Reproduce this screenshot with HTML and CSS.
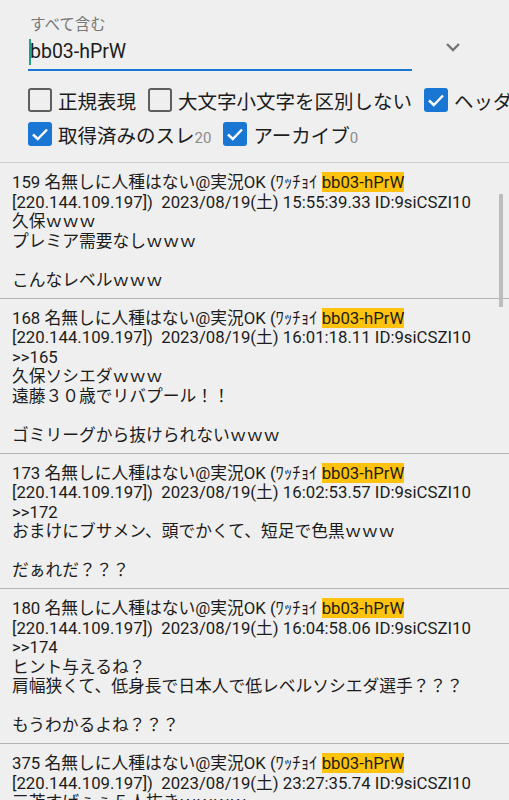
FILE: index.html
```html
<!DOCTYPE html>
<html lang="ja">
<head>
    <meta charset="UTF-8">
    <meta name="viewport" content="width=device-width, initial-scale=1.0">
    <title>検索</title>
    <link rel="stylesheet" href="styles.css">
</head>
<body>
    <div class="search">
        <div class="field-row">
            <div class="field">
                <div class="field-label">すべて含む</div>
                <div class="field-input"><span class="caret"></span>bb03-hPrW</div>
            </div>
            <svg class="chevron" width="16" height="10" viewBox="0 0 16 10">
                <path d="M2 2 L8 8 L14 2" fill="none" stroke="#757575" stroke-width="2.4"/>
            </svg>
        </div>

        <div class="options">
            <div class="opt-row">
                <label class="opt"><span class="box"></span>正規表現</label>
                <label class="opt"><span class="box"></span>大文字小文字を区別しない</label>
                <label class="opt"><span class="box checked"><svg viewBox="0 0 24 24"><path d="M5 12.5 L9.8 17 L19 7.5"/></svg></span>ヘッダ</label>
            </div>
            <div class="opt-row">
                <label class="opt"><span class="box checked"><svg viewBox="0 0 24 24"><path d="M5 12.5 L9.8 17 L19 7.5"/></svg></span><span>取得済みのスレ<span class="count">20</span></span></label>
                <label class="opt"><span class="box checked"><svg viewBox="0 0 24 24"><path d="M5 12.5 L9.8 17 L19 7.5"/></svg></span><span>アーカイブ<span class="count">0</span></span></label>
            </div>
        </div>
    </div>

    <div class="results">
<div class="post">159 名無しに人種はない@実況OK (ﾜｯﾁｮｲ <span class="hit">bb03-hPrW</span>
[220.144.109.197])  2023/08/19(土) 15:55:39.33 ID:9siCSZI10
久保ｗｗｗ
プレミア需要なしｗｗｗ

こんなレベルｗｗｗ</div>
<div class="post">168 名無しに人種はない@実況OK (ﾜｯﾁｮｲ <span class="hit">bb03-hPrW</span>
[220.144.109.197])  2023/08/19(土) 16:01:18.11 ID:9siCSZI10
&gt;&gt;165
久保ソシエダｗｗｗ
遠藤３０歳でリバプール！！

ゴミリーグから抜けられないｗｗｗ</div>
<div class="post">173 名無しに人種はない@実況OK (ﾜｯﾁｮｲ <span class="hit">bb03-hPrW</span>
[220.144.109.197])  2023/08/19(土) 16:02:53.57 ID:9siCSZI10
&gt;&gt;172
おまけにブサメン、頭でかくて、短足で色黒ｗｗｗ

だぁれだ？？？</div>
<div class="post">180 名無しに人種はない@実況OK (ﾜｯﾁｮｲ <span class="hit">bb03-hPrW</span>
[220.144.109.197])  2023/08/19(土) 16:04:58.06 ID:9siCSZI10
&gt;&gt;174
ヒント与えるね？
肩幅狭くて、低身長で日本人で低レベルソシエダ選手？？？

もうわかるよね？？？</div>
<div class="post">375 名無しに人種はない@実況OK (ﾜｯﾁｮｲ <span class="hit">bb03-hPrW</span>
[220.144.109.197])  2023/08/19(土) 23:27:35.74 ID:9siCSZI10
三苫すげぇぇ５人抜きｗｗｗｗ</div>
        <div class="thumb"></div>
    </div>
</body>
</html>
```

FILE: styles.css
```css
* {
    box-sizing: border-box;
}

body {
    margin: 0;
    height: 800px;
    overflow: hidden;
    background: #efefef;
    color: #1c1c1c;
    font-family: Roboto, "Noto Sans CJK JP", sans-serif;
}

/* search header */
.search {
    padding: 0 0 13px 28px;
    overflow: hidden;
}

.field-row {
    display: flex;
    align-items: flex-start;
}

.field {
    width: 384px;
    padding: 17px 0 4px 2px;
    border-bottom: 2px solid #1976d2;
}

.field-label {
    font-size: 15.5px;
    line-height: 16px;
    color: #787878;
}

.field-input {
    margin-top: 6px;
    font-size: 19.5px;
    line-height: 26px;
    height: 26px;
    color: #1c1c1c;
}

.caret {
    display: inline-block;
    width: 2px;
    height: 26px;
    margin: 0 -1px 0 -1px;
    vertical-align: top;
    background: #1f9e8e;
}

.chevron {
    margin: 42px 0 0 33px;
}

.options {
    margin-top: 14px;
}

.opt-row {
    display: flex;
    align-items: center;
    gap: 12px;
    height: 30px;
    white-space: nowrap;
}

.opt-row + .opt-row {
    margin-top: 4px;
}

.opt {
    display: flex;
    align-items: center;
    gap: 6px;
    font-size: 19.5px;
    flex-shrink: 0;
}

.box {
    width: 24px;
    height: 24px;
    border: 2.5px solid #5f5f5f;
    border-radius: 3px;
    flex-shrink: 0;
}

.box.checked {
    border: none;
    background: #1976d2;
}

.box svg {
    display: block;
    width: 24px;
    height: 24px;
    fill: none;
    stroke: #fff;
    stroke-width: 2.4;
}

.count {
    font-size: 15px;
    color: #8c8c8c;
}

/* results list */
.results {
    position: relative;
    border-top: 1px solid #cdcdcd;
}

.post {
    padding: 10px 6px 7.5px 12px;
    border-bottom: 1px solid #b3b3b3;
    font-size: 16.75px;
    line-height: 19.5px;
    white-space: pre-wrap;
}

.hit {
    background: #ffc20e;
}

.thumb {
    position: absolute;
    top: 31px;
    right: 6px;
    width: 4px;
    height: 113px;
    background: #bdbdbd;
}
```
